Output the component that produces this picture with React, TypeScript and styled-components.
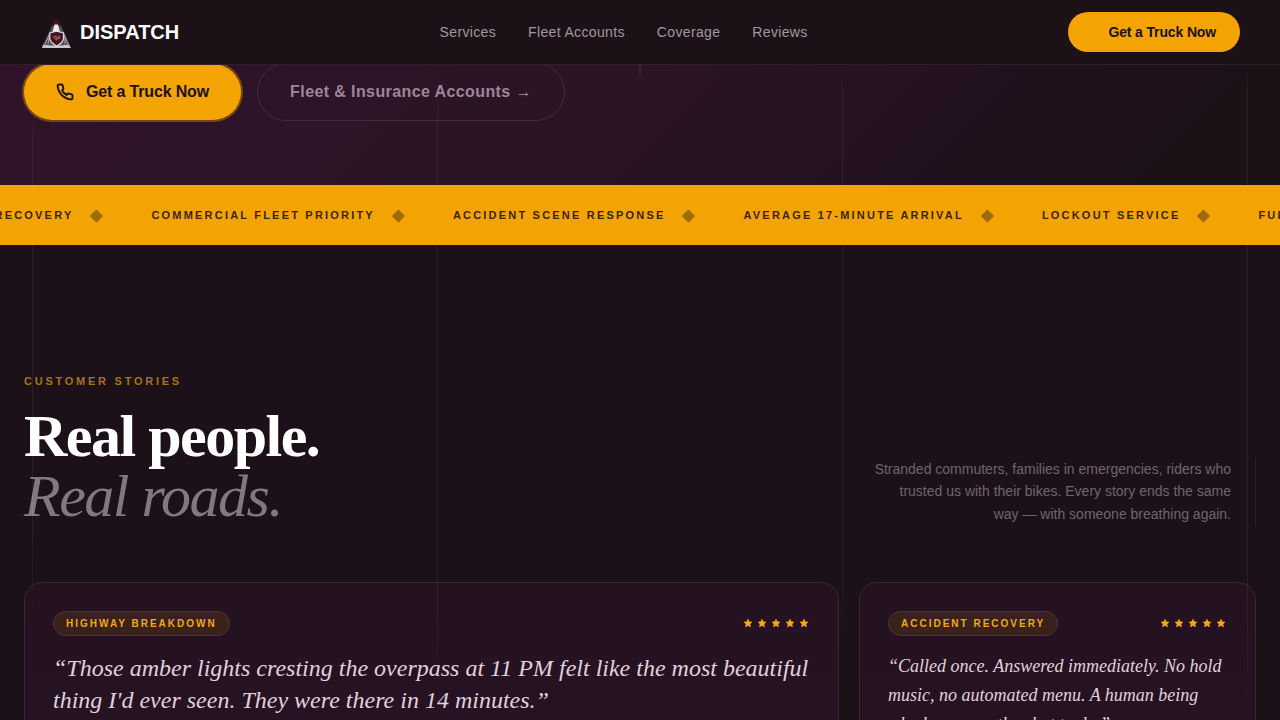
import React from "react";
import styled, { createGlobalStyle } from "styled-components";

const Global = createGlobalStyle`
  * { box-sizing: border-box; margin: 0; padding: 0; }
  body { background: #1c1118; font-family: "Liberation Sans", Arial, sans-serif; overflow: hidden; }
`;

const Page = styled.div`
  height: 720px;
  overflow: hidden;
  position: relative;
  display: flex;
  flex-direction: column;
`;

const Nav = styled.header`
  flex: none;
  height: 65px;
  padding: 0 40px;
  display: flex;
  justify-content: space-between;
  align-items: center;
  background: #1c1117;
  border-bottom: 1px solid #2d2027;
`;

const Brand = styled.a`
  display: flex;
  align-items: center;
  gap: 8px;
  font-size: 20px;
  font-weight: 700;
  color: #fff;
`;

const NavLinks = styled.nav`
  display: flex;
  gap: 32px;
  font-size: 14px;
  letter-spacing: 0.35px;
  color: #a3979f;
`;

const NavButton = styled.button`
  width: 172px;
  height: 40px;
  padding: 0 23.5px 0 40px;
  border: 0;
  border-radius: 20px;
  background: #f3a402;
  color: #1c1117;
  font: 700 14px "Liberation Sans", Arial, sans-serif;
  letter-spacing: -0.14px;
  white-space: nowrap;
`;

const Hero = styled.section`
  flex: none;
  height: 120px;
  padding: 0 24px;
  display: flex;
  align-items: flex-start;
  gap: 16px;
  overflow: hidden;
  background: linear-gradient(135deg, #30132a 0%, #2c1427 36%, #251222 66%, #20111c 76%, #1d1118 90%);
`;

const Primary = styled.button`
  width: 217px;
  height: 56px;
  margin-top: -1px;
  display: flex;
  align-items: center;
  padding-left: 32px;
  gap: 12px;
  border: 0;
  border-radius: 28px;
  background: #f3a402;
  box-shadow: 0 0 0 2px #75490f;
  color: #1c1117;
  font: 700 16px "Liberation Sans", Arial, sans-serif;
  letter-spacing: -0.16px;
  white-space: nowrap;
`;

const Secondary = styled.button`
  width: 308px;
  height: 58px;
  margin-top: -2px;
  border: 1px solid #422c3c;
  border-radius: 29px;
  background: transparent;
  color: #9b8797;
  font: 700 16px "Liberation Sans", Arial, sans-serif;
  letter-spacing: 0.4px;
`;

const Ticker = styled.div`
  flex: none;
  height: 60px;
  background: #f3a402;
  overflow: hidden;
  display: flex;
  position: relative;
  z-index: 1;
`;

const Track = styled.div`
  display: flex;
  align-items: center;
  flex: none;
  margin-left: -5.5px;
`;

const TickerItem = styled.span`
  flex: none;
  display: flex;
  align-items: center;
  gap: 16px;
  margin-right: 48px;
  font-size: 11px;
  font-weight: 700;
  letter-spacing: 2.2px;
  color: #3c240f;
  white-space: nowrap;
`;

const Diamond = styled.svg`
  width: 14px;
  height: 14px;
  margin-top: 2px;
  fill: #9b6b0c;
`;

const Stories = styled.main`
  flex: 1;
  padding: 130px 24px 0;
`;

const Eyebrow = styled.p`
  font-size: 11px;
  line-height: 13px;
  font-weight: 700;
  letter-spacing: 2.75px;
  color: #a87314;
`;

const Intro = styled.div`
  display: flex;
  justify-content: space-between;
  align-items: flex-end;
  margin-top: 18px;
`;

const Title = styled.h2`
  font: 700 60px/60px "Liberation Serif", "Times New Roman", serif;
  letter-spacing: -1.5px;
  color: #fff;
`;

const TitleSub = styled.em`
  display: block;
  font-weight: 400;
  color: #82797f;
`;

const Lead = styled.p`
  width: 384px;
  padding: 0 24px 1px 0;
  border-right: 1px solid #2d2228;
  font-size: 14px;
  line-height: 22.4px;
  text-align: right;
  color: #6f666c;
`;

const Cards = styled.div`
  display: grid;
  grid-template-columns: 815px 397px;
  gap: 20px;
  margin-top: 56px;
`;

const Card = styled.article`
  height: 260px;
  padding: 28px;
  border: 1px solid #38282f;
  border-radius: 18px;
  background: linear-gradient(180deg, #241221, #261223);
`;

const CardTop = styled.div`
  display: flex;
  align-items: flex-start;
  justify-content: space-between;
`;

const Tag = styled.span`
  height: 25px;
  padding: 0 12px;
  border: 1px solid #55361a;
  border-radius: 13px;
  background: #3a221c;
  color: #f3a51f;
  font-size: 10px;
  line-height: 23px;
  font-weight: 700;
  letter-spacing: 2px;
`;

const Stars = styled.div`
  display: flex;
  gap: 4px;
  margin: 6.5px 1px 0 0;
`;

const Star = styled.svg`
  width: 10px;
  height: 10px;
  fill: #f5a524;
  stroke: #f5a524;
  stroke-width: 1.5;
  stroke-linejoin: round;
`;

const Quote = styled.p<{ $large?: boolean }>`
  margin-top: 16px;
  font-family: "Liberation Serif", "Times New Roman", serif;
  font-style: italic;
  font-size: ${(p) => (p.$large ? 24 : 18)}px;
  line-height: ${(p) => (p.$large ? 32.4 : 28.8)}px;
  color: #e0d1dc;
  white-space: nowrap;
`;

const Guides = styled.div`
  position: absolute;
  inset: 0 32px;
  display: flex;
  justify-content: space-between;
  pointer-events: none;
`;

const Guide = styled.i<{ $from: number; $to: number }>`
  width: 1px;
  background: linear-gradient(
    180deg,
    transparent ${(p) => p.$from}px,
    rgba(255, 255, 255, 0.06) ${(p) => p.$from + 20}px,
    rgba(255, 255, 255, 0.06) ${(p) => p.$to - 80}px,
    transparent ${(p) => p.$to}px
  );
`;

const ScrollCue = styled.i`
  position: absolute;
  left: 639px;
  top: 65px;
  width: 2px;
  height: 12px;
  background: linear-gradient(180deg, #3b2734, #301f2b);
`;

const Logo = () => (
  <svg width="32" height="32" viewBox="0 0 32 32" aria-hidden="true">
    <path d="M12 9L15 3H18L21 9L22 12H11Z" fill="#45131f" />
    <path d="M12 10L3 29H30L21 10Z" fill="#544d54" />
    <path d="M14.5 8.5H18L20 16H12.5Z" fill="#eeeaea" />
    <path d="M10.5 16L5 28M9.5 19L8 28M23 16L28 28M25 20L25 28" stroke="#a6a1a6" strokeWidth="1" />
    <path d="M3 28.5Q16 30.5 29 28.5L31 32H2Z" fill="#c9c6c8" />
    <path d="M9.8 17L16.5 15.2L23.5 17V23Q22 27.5 16.7 30Q11.2 27.5 9.8 23Z" fill="#431427" stroke="#dcd8dc" strokeWidth="1.2" />
    <path d="M13.5 21L16 20.4L17.2 21.2L20 20.8L19 22.8L17 22.2L16.5 24L15 22.6Z" fill="none" stroke="#c9752f" strokeWidth="1" />
  </svg>
);

const Phone = () => (
  <svg width="18" height="18" viewBox="0 0 24 24" fill="none" stroke="#1c1117" strokeWidth="2.5" strokeLinecap="round" strokeLinejoin="round">
    <path d="M22 16.92v3a2 2 0 0 1-2.18 2 19.79 19.79 0 0 1-8.63-3.07 19.5 19.5 0 0 1-6-6 19.79 19.79 0 0 1-3.07-8.67A2 2 0 0 1 4.11 2h3a2 2 0 0 1 2 1.72c.127.96.361 1.903.7 2.81a2 2 0 0 1-.45 2.11L8.09 9.91a16 16 0 0 0 6 6l1.27-1.27a2 2 0 0 1 2.11-.45c.907.339 1.85.573 2.81.7A2 2 0 0 1 22 16.92z" />
  </svg>
);

const Rating = () => (
  <Stars>
    {[0, 1, 2, 3, 4].map((n) => (
      <Star key={n} viewBox="0 0 24 24">
        <path d="M12 3l2.9 6 6.6.9-4.8 4.6 1.2 6.6-5.9-3.1-5.9 3.1 1.2-6.6L2.5 9.9 9.1 9z" />
      </Star>
    ))}
  </Stars>
);

const services = [
  "RECOVERY",
  "COMMERCIAL FLEET PRIORITY",
  "ACCIDENT SCENE RESPONSE",
  "AVERAGE 17-MINUTE ARRIVAL",
  "LOCKOUT SERVICE",
  "FUEL DELIVERY",
];

export default function App() {
  return (
    <Page>
      <Global />
      <Nav>
        <Brand><Logo />DISPATCH</Brand>
        <NavLinks>
          <a>Services</a><a>Fleet Accounts</a><a>Coverage</a><a>Reviews</a>
        </NavLinks>
        <NavButton>Get a Truck Now</NavButton>
      </Nav>
      <Hero>
        <Primary><Phone />Get a Truck Now</Primary>
        <Secondary>Fleet &amp; Insurance Accounts →</Secondary>
      </Hero>
      <Ticker>
        <Track>
          {services.map((s) => (
            <TickerItem key={s}>
              {s}
              <Diamond viewBox="0 0 14 14"><path d="M7.4 0.5L14 7.1L7.4 13.7L0.8 7.1Z" /></Diamond>
            </TickerItem>
          ))}
        </Track>
      </Ticker>
      <Stories>
        <Eyebrow>CUSTOMER STORIES</Eyebrow>
        <Intro>
          <Title>Real people.<TitleSub>Real roads.</TitleSub></Title>
          <Lead>Stranded commuters, families in emergencies, riders who trusted us with their bikes. Every story ends the same way — with someone breathing again.</Lead>
        </Intro>
        <Cards>
          <Card>
            <CardTop><Tag>HIGHWAY BREAKDOWN</Tag><Rating /></CardTop>
            <Quote $large>
              “Those amber lights cresting the overpass at 11 PM felt like the most beautiful
              <br />thing I'd ever seen. They were there in 14 minutes.”
            </Quote>
          </Card>
          <Card>
            <CardTop><Tag>ACCIDENT RECOVERY</Tag><Rating /></CardTop>
            <Quote>
              “Called once. Answered immediately. No hold
              <br />music, no automated menu. A human being
              <br />who knew exactly what to do.”
            </Quote>
          </Card>
        </Cards>
      </Stories>
      <Guides>
        <Guide $from={120} $to={620} />
        <Guide $from={100} $to={690} />
        <Guide $from={75} $to={640} />
        <Guide $from={68} $to={700} />
      </Guides>
      <ScrollCue />
    </Page>
  );
}
